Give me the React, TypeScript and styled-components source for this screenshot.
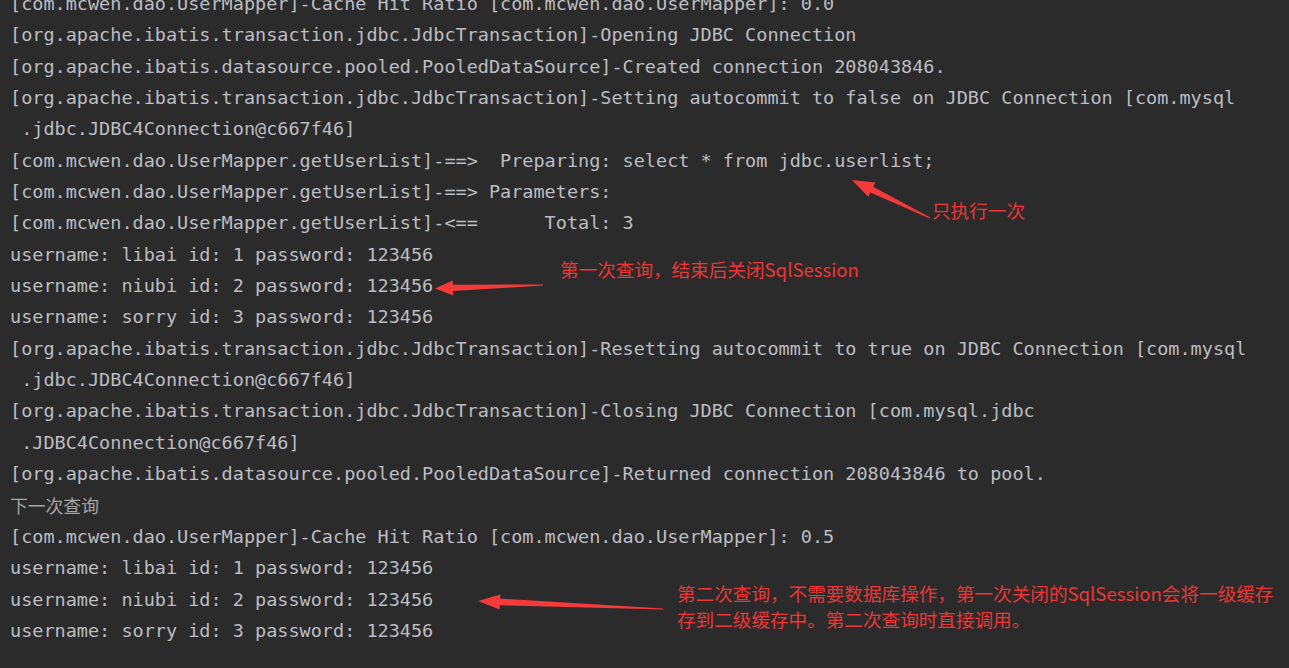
import React from "react";
import styled, { createGlobalStyle, css } from "styled-components";

const GlobalStyle = createGlobalStyle`
  html, body {
    margin: 0;
    padding: 0;
    background: #2b2b2b;
  }
  body {
    overflow: hidden;
  }
`;

const Console = styled.div`
  position: relative;
  width: 1289px;
  height: 668px;
  overflow: hidden;
  background: #2b2b2b;
`;

const Log = styled.div`
  display: flex;
  flex-direction: column;
  margin-top: -12px;
  padding-left: 10px;
  font-family: "DejaVu Sans Mono", "Liberation Mono", monospace;
  font-size: 18.5px;
  line-height: 31.35px;
  color: #bbbdc2;
`;

const Line = styled.div<{ $cjk?: boolean }>`
  white-space: pre;
  height: 31.35px;
  ${(p) =>
    p.$cjk &&
    css`
      font-family: "Noto Sans CJK SC", sans-serif;
      font-size: 17.8px;
      color: #a4a4a4;
    `}
`;

const Note = styled.div<{ $x: number; $y: number }>`
  position: absolute;
  left: ${(p) => p.$x}px;
  top: ${(p) => p.$y}px;
  font-family: "Noto Sans CJK SC", sans-serif;
  font-size: 18.6px;
  line-height: 26px;
  color: #ee3535;
  white-space: pre;
`;

const ArrowLayer = styled.svg`
  position: absolute;
  left: 0;
  top: 0;
  width: 100%;
  height: 100%;
  pointer-events: none;
`;

type Pt = [number, number];

function arrowPoints(
  tail: Pt,
  tip: Pt,
  headLen: number,
  headHalf: number,
  shaftHalf: number,
  tailHalf: number
): string {
  const dx = tip[0] - tail[0];
  const dy = tip[1] - tail[1];
  const len = Math.hypot(dx, dy);
  const ux = dx / len;
  const uy = dy / len;
  const nx = -uy;
  const ny = ux;
  const bx = tip[0] - ux * headLen;
  const by = tip[1] - uy * headLen;
  const pts: Pt[] = [
    [tail[0] + nx * tailHalf, tail[1] + ny * tailHalf],
    [bx + nx * shaftHalf, by + ny * shaftHalf],
    [bx + nx * headHalf, by + ny * headHalf],
    tip,
    [bx - nx * headHalf, by - ny * headHalf],
    [bx - nx * shaftHalf, by - ny * shaftHalf],
    [tail[0] - nx * tailHalf, tail[1] - ny * tailHalf],
  ];
  return pts.map((p) => `${p[0].toFixed(1)},${p[1].toFixed(1)}`).join(" ");
}

const lines: { text: string; cjk?: boolean }[] = [
  { text: "[com.mcwen.dao.UserMapper]-Cache Hit Ratio [com.mcwen.dao.UserMapper]: 0.0" },
  { text: "[org.apache.ibatis.transaction.jdbc.JdbcTransaction]-Opening JDBC Connection" },
  { text: "[org.apache.ibatis.datasource.pooled.PooledDataSource]-Created connection 208043846." },
  { text: "[org.apache.ibatis.transaction.jdbc.JdbcTransaction]-Setting autocommit to false on JDBC Connection [com.mysql" },
  { text: " .jdbc.JDBC4Connection@c667f46]" },
  { text: "[com.mcwen.dao.UserMapper.getUserList]-==>  Preparing: select * from jdbc.userlist;" },
  { text: "[com.mcwen.dao.UserMapper.getUserList]-==> Parameters: " },
  { text: "[com.mcwen.dao.UserMapper.getUserList]-<==      Total: 3" },
  { text: "username: libai id: 1 password: 123456" },
  { text: "username: niubi id: 2 password: 123456" },
  { text: "username: sorry id: 3 password: 123456" },
  { text: "[org.apache.ibatis.transaction.jdbc.JdbcTransaction]-Resetting autocommit to true on JDBC Connection [com.mysql" },
  { text: " .jdbc.JDBC4Connection@c667f46]" },
  { text: "[org.apache.ibatis.transaction.jdbc.JdbcTransaction]-Closing JDBC Connection [com.mysql.jdbc" },
  { text: " .JDBC4Connection@c667f46]" },
  { text: "[org.apache.ibatis.datasource.pooled.PooledDataSource]-Returned connection 208043846 to pool." },
  { text: "下一次查询", cjk: true },
  { text: "[com.mcwen.dao.UserMapper]-Cache Hit Ratio [com.mcwen.dao.UserMapper]: 0.5" },
  { text: "username: libai id: 1 password: 123456" },
  { text: "username: niubi id: 2 password: 123456" },
  { text: "username: sorry id: 3 password: 123456" },
];

const arrows: { tail: Pt; tip: Pt; headLen: number; headHalf: number; shaftHalf: number; tailHalf: number }[] = [
  { tail: [930, 218], tip: [852, 180], headLen: 22, headHalf: 8, shaftHalf: 3.2, tailHalf: 0.6 },
  { tail: [543, 285], tip: [435, 288.5], headLen: 18, headHalf: 7.5, shaftHalf: 3.2, tailHalf: 0.6 },
  { tail: [663, 609], tip: [478, 601], headLen: 22, headHalf: 7.5, shaftHalf: 3.4, tailHalf: 0.6 },
];

export default function App() {
  return (
    <>
      <GlobalStyle />
      <Console>
        <Log>
          {lines.map((l, i) => (
            <Line key={i} $cjk={l.cjk}>
              {l.text}
            </Line>
          ))}
        </Log>
        <ArrowLayer viewBox="0 0 1289 668">
          {arrows.map((a, i) => (
            <polygon
              key={i}
              points={arrowPoints(a.tail, a.tip, a.headLen, a.headHalf, a.shaftHalf, a.tailHalf)}
              fill="#f43a3a"
            />
          ))}
        </ArrowLayer>
        <Note $x={932} $y={197}>只执行一次</Note>
        <Note $x={560} $y={256}>第一次查询，结束后关闭SqlSession</Note>
        <Note $x={677} $y={580}>
          {"第二次查询，不需要数据库操作，第一次关闭的SqlSession会将一级缓存\n存到二级缓存中。第二次查询时直接调用。"}
        </Note>
      </Console>
    </>
  );
}
